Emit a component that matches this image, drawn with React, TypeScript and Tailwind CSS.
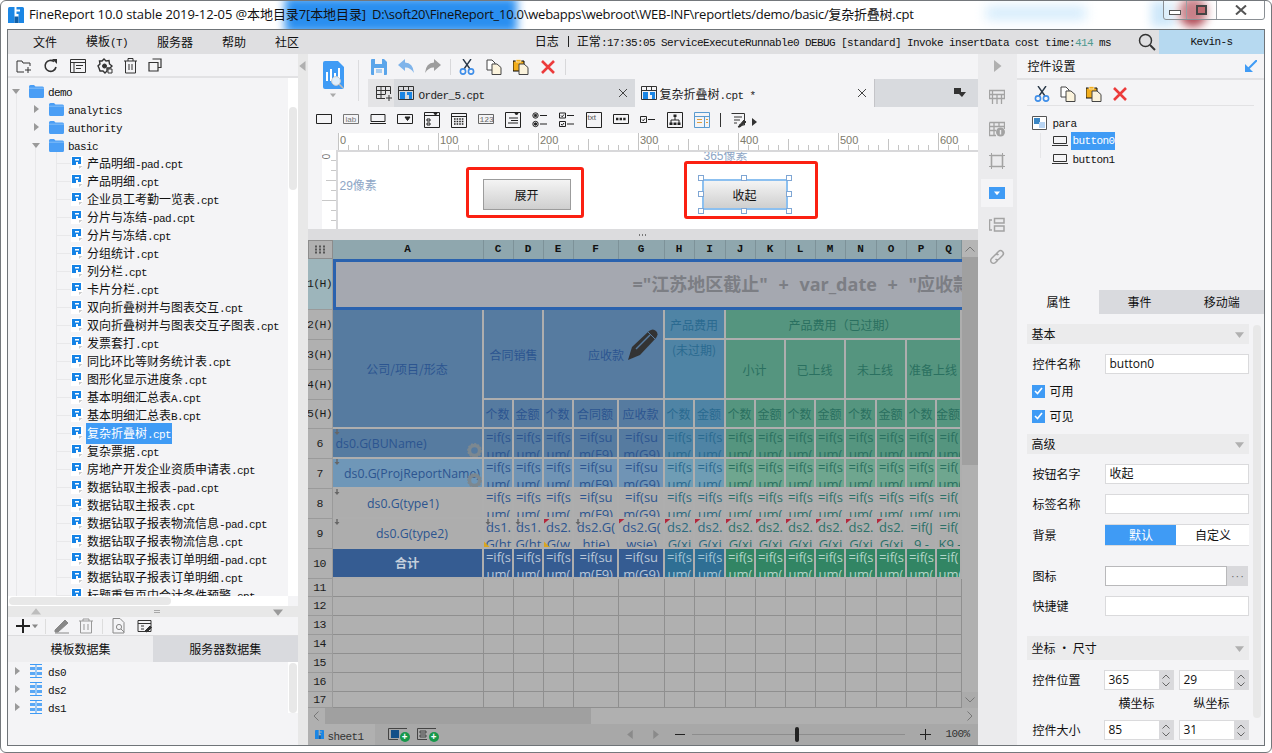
import type { ReactNode } from "react";

const SANS = "font-['Open_Sans','Noto_Sans_CJK_SC',sans-serif]";
const MONO = "font-['Liberation_Mono','Noto_Sans_CJK_SC',monospace]";

// ascii in the slab mono, cjk at 12px: same mix the app's bitmap font gives
function Mixed({ text }: { text: string }) {
  return (
    <>
      {text.split(/([\x00-\x7f]+)/).map((part, i) =>
        /^[\x00-\x7f]+$/.test(part) ? (
          <span key={i} className="font-['Liberation_Mono',monospace] text-[11px] tracking-[-0.6px]">{part}</span>
        ) : (
          <span key={i} className="font-['Noto_Sans_CJK_SC',sans-serif] text-[12px]">{part}</span>
        )
      )}
    </>
  );
}

function Svg({ w = 16, h = 16, children, className }: { w?: number; h?: number; children: ReactNode; className?: string }) {
  return (
    <svg width={w} height={h} viewBox={`0 0 ${w} ${h}`} fill="none" stroke="currentColor" className={`shrink-0 ${className ?? ""}`}>
      {children}
    </svg>
  );
}

function Tri({ dir, size = 8, className }: { dir: "down" | "right" | "left" | "up"; size?: number; className?: string }) {
  const pts = { down: "0,2 8,2 4,7", right: "2,0 7,4 2,8", left: "6,0 1,4 6,8", up: "0,6 8,6 4,1" }[dir];
  return (
    <svg width={size} height={size} viewBox="0 0 8 8" className={`shrink-0 ${className ?? ""}`}>
      <polygon points={pts} fill="currentColor" />
    </svg>
  );
}

const Folder = () => (
  <svg width="15" height="13" viewBox="0 0 15 13" className="shrink-0">
    <path d="M0 1.5Q0 0 1.5 0H5L6.5 1.5H13.5Q15 1.5 15 3V11.5Q15 13 13.5 13H1.5Q0 13 0 11.5Z" fill="#4a9ef5" />
    <path d="M0 3.2H15" stroke="#9ccbfa" strokeWidth="0.7" />
  </svg>
);

const CptFile = () => (
  <svg width="12" height="14" viewBox="0 0 12 14" className="shrink-0">
    <path d="M0 0H12V10L9 14H0Z" fill="#fff" />
    <path d="M1 1H10V8H7V6H5V9H1Z" fill="#1583e6" />
    <path d="M4 3H8V4.5H4Z" fill="#fff" />
    <path d="M8 13L11.5 10H8Z" fill="#c8c8c8" />
  </svg>
);

const FrMark = ({ s = 16 }: { s?: number }) => (
  <svg width={s} height={s} viewBox="0 0 16 16" className="shrink-0">
    <path d="M0 1.5Q0 0 1.5 0H6.5V16H0Z" fill="#1b86e4" />
    <path d="M8.5 0H14.5Q16 0 16 1.5V16H10.5V7H8.5V4.5H12V2.5H8.5Z" fill="#1b86e4" />
    <path d="M6.5 9.5H10.5V16H6.5Z" fill="#0f5fa8" />
  </svg>
);

const Cut = () => (
  <Svg>
    <path d="M4 0L11 10M12 0L5 10" stroke="#2b3a4a" strokeWidth="1.4" />
    <circle cx="4" cy="12.5" r="2.6" stroke="#3f8ee8" strokeWidth="1.6" />
    <circle cx="12" cy="12.5" r="2.6" stroke="#3f8ee8" strokeWidth="1.6" />
  </Svg>
);

const CopyIcon = () => (
  <Svg>
    <path d="M1 1H6L9 4V11H1Z" fill="#fff" stroke="#444" />
    <path d="M6 5H11L15 8.5V15.5H6Z" fill="#fbf3dc" stroke="#444" />
  </Svg>
);

const Paste = () => (
  <Svg>
    <path d="M0 2H11V12H0Z" fill="#f2ae1c" />
    <path d="M3 0.5H8V3H3Z" fill="#f2ae1c" stroke="#fff" strokeWidth="0.6" />
    <path d="M6 5H11L15 8.5V15.5H6Z" fill="#fbf3dc" stroke="#444" />
  </Svg>
);

const Del = () => (
  <Svg>
    <path d="M2 2L14 14M14 2L2 14" stroke="#ec3b3b" strokeWidth="2.6" />
  </Svg>
);

const BtnIcon = () => (
  <Svg h={10} className="text-[#333]">
    <path d="M1.5 0.5H14.5V7.5H1.5Z" />
    <path d="M0 9.5H16" />
  </Svg>
);

const leftTools = [
  <Svg key="a" className="text-[#333]"><path d="M1 3H6L7 5H14V8M1 3V14H8M12 9V15M9 12H15" /></Svg>,
  <Svg key="b" className="text-[#333]"><path d="M13 9A5.5 5.5 0 1 1 11 3.5" strokeWidth="1.6" /><path d="M9 1H14V6Z" fill="currentColor" stroke="none" /></Svg>,
  <Svg key="c" className="text-[#333]"><path d="M0.5 1.5H15.5V14.5H0.5ZM0.5 4.5H15.5M4 4.5V14.5M6 7.5H13M6 10.5H11" /></Svg>,
  <Svg key="d" className="text-[#333]"><path d="M7 1L9 3L12 2.5L12.5 6L15 8L13 10H10V13L8 15L6 13H3L2 10L1 8L3 6L2.5 3L5 3Z" strokeWidth="1.4" /><circle cx="7.5" cy="8" r="2" fill="currentColor" /><path d="M11 11H15V15H11Z" fill="#f4f4f6" /></Svg>,
  <Svg key="e" w={13} className="text-[#333]"><path d="M0 3H13M4 3V0.5H9V3M1.5 3V15H11.5V3M5 6V12M8 6V12" /></Svg>,
  <Svg key="f" w={14} className="text-[#333]"><path d="M4.5 1H13V9.5H10M1 4.5H10V13H1Z" strokeWidth="1.2" /></Svg>,
];

const widgetIcons = [
  <path key="0" d="M0.5 2.5H15.5V11.5H0.5Z" />,
  <g key="1"><path d="M0.5 2.5H15.5V11.5H0.5Z" stroke="#777" /><text x="2.5" y="10" fontSize="8" fill="#777" stroke="none" fontFamily="Liberation Sans">lab</text></g>,
  <path key="2" d="M1 2.5H15V9.5H1ZM0 11.5H16" />,
  <g key="3"><path d="M0.5 2.5H15.5V11.5H0.5Z" /><path d="M8 5H13L10.5 8.5Z" fill="#222" /></g>,
  <g key="4"><path d="M0.5 0.5H15.5V15.5H0.5ZM0.5 3.5H15.5M3 7H6V9H3ZM3 11H6V13H3Z" /><path d="M10 1.5H13L11.5 3Z" fill="#222" /></g>,
  <g key="5"><path d="M0.5 1.5H15.5V15.5H0.5ZM0.5 4.5H15.5" /><path d="M3 7H13M3 9.5H13M3 12H13" strokeWidth="1.4" strokeDasharray="1.6 1" /></g>,
  <g key="6"><path d="M0.5 2.5H15.5V11.5H0.5Z" stroke="#666" /><text x="1.5" y="10" fontSize="8" fill="#666" stroke="none" fontFamily="Liberation Mono">123</text></g>,
  <g key="7"><path d="M0.5 0.5H15.5V15.5H0.5ZM4 6H13M6 8.5H13M3 11H13" /><path d="M10 1.5H13L11.5 3Z" fill="#222" /></g>,
  <g key="8"><circle cx="3.5" cy="3.5" r="2.7" /><circle cx="3.5" cy="3.5" r="1.2" fill="#222" /><circle cx="3.5" cy="12" r="2.7" /><circle cx="3.5" cy="12" r="1.2" fill="#222" /><path d="M8 3.5H15M8 12H15" /></g>,
  <g key="9"><path d="M0.5 1H6.5V6H0.5ZM0.5 9.5H6.5V14.5H0.5ZM2 3.5L3.2 4.8L5 2.5M2 12L3.2 13.3L5 11M8 3.5H15M8 12H15" /></g>,
  <g key="10"><path d="M0.5 0.5H15.5V15.5H0.5Z" /><text x="1.5" y="8" fontSize="8" fill="#555" stroke="none" fontFamily="Liberation Sans">txt</text></g>,
  <g key="11"><path d="M0.5 2.5H15.5V11.5H0.5Z" /><path d="M3 7H13" strokeWidth="2.4" strokeDasharray="2.4 1.2" /></g>,
  <path key="12" d="M0.5 4.5H6.5V10.5H0.5ZM2 7.5L3.2 8.8L5 6.5M8 7.5H15" />,
  <g key="13"><path d="M0.5 0.5H15.5V15.5H0.5ZM8 5V8M4 11V8H12V11" /><path d="M6.5 2.5H9.5V5H6.5ZM2.5 10.5H5.5V13H2.5ZM6.5 10.5H9.5V13H6.5ZM10.5 10.5H13.5V13H10.5Z" fill="#222" stroke="none" /></g>,
  <g key="14"><path d="M0.5 0.5H15.5V15.5H0.5ZM0.5 4.5H15.5M10.5 4.5V15.5" stroke="#5a9bd0" /><path d="M3 7.5H8M3 10.5H8M12 7.5H14M12 10.5H14" stroke="#e0a040" /></g>,
];

const treeFiles = [
  "产品明细-pad.cpt", "产品明细.cpt", "企业员工考勤一览表.cpt", "分片与冻结-pad.cpt", "分片与冻结.cpt",
  "分组统计.cpt", "列分栏.cpt", "卡片分栏.cpt", "双向折叠树并与图表交互.cpt", "双向折叠树并与图表交互子图表.cpt",
  "发票套打.cpt", "同比环比等财务统计表.cpt", "图形化显示进度条.cpt", "基本明细汇总表A.cpt", "基本明细汇总表B.cpt",
  "复杂折叠树.cpt", "复杂票据.cpt", "房地产开发企业资质申请表.cpt", "数据钻取主报表-pad.cpt", "数据钻取主报表.cpt",
  "数据钻取子报表物流信息-pad.cpt", "数据钻取子报表物流信息.cpt", "数据钻取子报表订单明细-pad.cpt", "数据钻取子报表订单明细.cpt",
  "标题重复页中合计条件预警.cpt",
];

function TitleBar() {
  return (
    <div className="relative h-[28px] overflow-hidden">
      <div className="absolute left-[284px] top-[-4px] w-[232px] h-[36px] bg-[#2a8ff0] blur-[5px]" />
      <div className="absolute left-[985px] top-[5px] w-[100px] h-[14px] bg-[#d5ecfc] blur-[6px]" />
      <div className="absolute left-[1150px] top-[0px] w-[24px] h-[26px] bg-[#cfe8fa] blur-[5px]" />
      <div className="absolute left-[1178px] top-[-4px] w-[28px] h-[30px] rounded-full bg-[#b04a55] blur-[5px]" />
      <div className="relative flex items-center h-full pl-[7px] text-[13px] text-[#111] whitespace-nowrap font-['Open_Sans','Noto_Sans_CJK_SC',sans-serif]">
        <FrMark />
        <span className="ml-[5px] w-[343px] tracking-[-0.1px]">FineReport 10.0 stable 2019-12-05 @本地目录7[本地目录]</span>
        <span className="tracking-[-0.25px]">D:\soft20\FineReport_10.0\webapps\webroot\WEB-INF\reportlets/demo/basic/复杂折叠树.cpt</span>
      </div>
      <div className="absolute right-[6px] top-[-1px] w-[102px] h-[20px] flex border border-[#8a8f94] rounded-b-[3px] bg-white/30">
        <div className="w-[23px] flex items-center justify-center border-r border-[#9aa0a5] pt-[5px]">
          <div className="w-[12px] h-[5px] border border-[#555] bg-white" />
        </div>
        <div className="w-[30px] flex items-center justify-center border-r border-[#9aa0a5]">
          <div className="w-[11px] h-[10px] border-2 border-[#444] bg-[#c06a70]" />
        </div>
        <div className="flex-1 flex items-center justify-center">
          <svg width="12" height="10" viewBox="0 0 12 10"><path d="M1 0.5L11 9.5M11 0.5L1 9.5" stroke="#555" strokeWidth="2" /></svg>
        </div>
      </div>
    </div>
  );
}

function MenuBar() {
  return (
    <div className="h-[24px] shrink-0 bg-[#dfdfe1] flex items-center justify-between text-[12px] text-[#111] font-['Noto_Sans_CJK_SC',sans-serif]">
      <div className="flex items-center gap-[29px] pl-[25px]">
        <span>文件</span>
        <span>模板<span className={`${MONO} text-[11px] tracking-[-0.6px]`}>(T)</span></span>
        <span>服务器</span>
        <span>帮助</span>
        <span>社区</span>
      </div>
      <div className="flex items-center h-full">
        <span className="whitespace-nowrap">日志<span className="inline-block w-[1px] h-[11px] bg-[#222] ml-[9px] mr-[8px] align-[-1px]" />正常<span className="font-['Liberation_Mono',monospace] text-[11px] tracking-[-0.6px]">:17:35:05 ServiceExecuteRunnable0 DEBUG [standard] Invoke insertData cost time:<span className="text-[#4f9a90]">414</span> ms</span></span>
        <Svg w={18} h={18} className="ml-[27px] text-[#333]"><circle cx="7.5" cy="7.5" r="6" strokeWidth="1.5" /><path d="M12 12L17 17" strokeWidth="2" /></Svg>
        <div className={`ml-[3px] w-[105px] h-full bg-[#b6d9f0] flex items-center justify-center ${MONO} text-[11px] tracking-[-0.6px]`}>Kevin-s</div>
      </div>
    </div>
  );
}

function TreeFolder({ name, indent, open }: { name: string; indent: string; open: boolean }) {
  return (
    <div className={`h-[18px] flex items-center ${indent}`}>
      <Tri dir={open ? "down" : "right"} size={8} className="text-[#9a9a9a]" />
      <span className="w-[9px]" />
      <Folder />
      <span className="ml-[4px]"><Mixed text={name} /></span>
    </div>
  );
}

function LeftPanel() {
  return (
    <div className="w-[290px] flex flex-col bg-[#f4f4f6] text-[#111] [&>*]:shrink-0">
      <div className="h-[24px] flex items-center pl-[8px] pt-[1px] gap-[11px] border-b-2 border-[#e2e2e4]">
        {leftTools}
      </div>
      <div className="h-[518px] flex overflow-hidden">
        <div className="relative flex-1 pt-[4px] whitespace-nowrap leading-[18px]">
          <div className="absolute left-[8px] top-[14px] bottom-0 w-px bg-[#e8e8ea]" />
          <div className="absolute left-[27px] top-[68px] bottom-0 w-px bg-[#e8e8ea]" />
          <div className="absolute left-[48px] top-[74px] bottom-0 w-px bg-[#e8e8ea]" />
          <div className="relative">
            <TreeFolder name="demo" indent="pl-[4px]" open />
            <TreeFolder name="analytics" indent="pl-[24px]" open={false} />
            <TreeFolder name="authority" indent="pl-[24px]" open={false} />
            <TreeFolder name="basic" indent="pl-[24px]" open />
            {treeFiles.map((f) => (
              <div key={f} className="h-[18px] flex items-center pl-[49px]">
                <span className="w-[14px] h-px bg-[#e8e8ea]" />
                <CptFile />
                <span className={f === "复杂折叠树.cpt" ? "ml-[3px] bg-[#3f9bf5] text-white px-[1px]" : "ml-[4px]"}>
                  <Mixed text={f} />
                </span>
              </div>
            ))}
          </div>
        </div>
        <div className="w-[10px] bg-white pt-[29px] px-[1px]">
          <div className="h-[83px] rounded-[4px] bg-[#e8e8e8]" />
        </div>
      </div>
      <div className="h-[10px] bg-white py-[1px] pl-[1px] flex">
        <div className="w-[162px] rounded-[4px] bg-[#e8e8e8]" />
        <div className="ml-auto w-[10px] -my-[1px] bg-[#f4f4f6]" />
      </div>
      <div className="h-[11px] bg-[#e8e8e8] flex items-center justify-between pl-[23px] pr-[15px] text-[#bdbdbd]">
        <Tri dir="up" size={10} />
        <div className="w-[6px] h-[3px] border-y border-[#a8a8a8]" />
        <Tri dir="down" size={10} className="text-[#9a9a9a]" />
      </div>
      <div className="h-[19px] flex items-center pl-[8px] border-b border-[#dcdcde]">
        <Svg w={14} h={14} className="text-[#222]"><path d="M7 0V14M0 7H14" strokeWidth="2" /></Svg>
        <Tri dir="down" size={6} className="ml-[2px] text-[#888]" />
        <span className="w-px h-[15px] bg-[#ddd] ml-[7px]" />
        <Svg className="ml-[8px] text-[#888]"><path d="M1 15H15" /><path d="M1 12L11 2L14 5L4 14H1Z" fill="#888" /></Svg>
        <Svg w={14} className="ml-[9px] text-[#999]"><path d="M0 3H14M4 3V1H10V3M1.5 3V15H12.5V3M5 6V12M9 6V12" /></Svg>
        <span className="w-px h-[15px] bg-[#ddd] ml-[9px]" />
        <Svg w={14} className="ml-[9px] text-[#888]"><path d="M1 0.5H8L12 4.5V15H1Z" /><circle cx="7" cy="9" r="2.6" /><path d="M9 11L12 14" /></Svg>
        <Svg className="ml-[11px] text-[#333]"><path d="M1 2.5H14V13.5H1ZM1 5.5H14M4 8H7M4 11H7" /><path d="M8 13L13 8L14.5 9.5L10 14Z" fill="#333" /></Svg>
      </div>
      <div className="h-[26px] flex text-[12px] font-['Noto_Sans_CJK_SC',sans-serif]">
        <div className="w-[145px] flex items-center justify-center bg-[#eeeef0]">模板数据集</div>
        <div className="flex-1 flex items-center justify-center bg-[#d9dade]">服务器数据集</div>
      </div>
      <div className="h-[83px] flex">
        <div className="flex-1 pl-[5px] leading-[18px]">
          {["ds0", "ds2", "ds1"].map((d) => (
            <div key={d} className="h-[18px] flex items-center">
              <Tri dir="right" size={8} className="text-[#9a9a9a]" />
              <svg width="14" height="14" viewBox="0 0 14 14" className="ml-[8px] shrink-0">
                <path d="M7 0V14M1 0.5H13M1 13.5H13" stroke="#3f9bf5" />
                <path d="M1 3H6V6H1ZM8 3H13V6H8ZM1 8H6V11H1ZM8 8H13V11H8Z" fill="#5aa8f5" />
              </svg>
              <span className="ml-[5px]"><Mixed text={d} /></span>
            </div>
          ))}
        </div>
        <div className="w-[10px] bg-white px-[1px] pt-[1px] h-[51px]">
          <div className="h-[50px] rounded-[4px] bg-[#e8e8e8]" />
        </div>
      </div>
    </div>
  );
}

function Ruler() {
  const ticks = Array.from({ length: 64 }, (_, i) => i * 10);
  return (
    <svg width="640" height="17" viewBox="0 0 640 17" className="block">
      {ticks.map((x) => (
        <path key={x} d={`M${x + 0.5} ${x % 100 === 0 ? 0 : x % 50 === 0 ? 6 : 12}V17`} stroke="#c4c4c4" />
      ))}
      {[0, 100, 200, 300, 400, 500, 600].map((n) => (
        <text key={n} x={n + 2} y={11} fontSize="11" fill="#7d7a6c" fontFamily="Liberation Sans">{n}</text>
      ))}
    </svg>
  );
}

function Handles() {
  const spots = [
    "left-[-6px] top-[-6px]", "left-[37px] top-[-6px]", "right-[-6px] top-[-6px]",
    "left-[-6px] top-[10px]", "right-[-6px] top-[10px]",
    "left-[-6px] bottom-[-6px]", "left-[37px] bottom-[-6px]", "right-[-6px] bottom-[-6px]",
  ];
  return (
    <>
      {spots.map((s) => (
        <div key={s} className={`absolute w-[6px] h-[6px] border border-[#7fa6d4] bg-white ${s}`} />
      ))}
    </>
  );
}

const colLetters = ["A", "C", "D", "E", "F", "G", "H", "I", "J", "K", "L", "M", "N", "O", "P", "Q"];
const formulaCols = colLetters.slice(1);

const tone: Record<"blue" | "teal" | "green", Record<number, string>> = {
  blue: {
    6: "bg-[#567ba0] text-[#2c5590]", 7: "bg-[#7094b5] text-[#2c5590]", 8: "bg-[#adadad] text-[#2c5590]",
    9: "bg-[#adadad] text-[#2c5590]", 10: "bg-[#355c92] text-[#bcc8d8]",
  },
  teal: {
    6: "bg-[#4f84a5] text-[#2a6a90]", 7: "bg-[#6f9db5] text-[#2a6a90]", 8: "bg-[#adadad] text-[#2a6a80]",
    9: "bg-[#adadad] text-[#2a6a80]", 10: "bg-[#2f6f94] text-[#a5c5d5]",
  },
  green: {
    6: "bg-[#55957f] text-[#2a7060]", 7: "bg-[#6fa68f] text-[#2a7060]", 8: "bg-[#adadad] text-[#2a7068]",
    9: "bg-[#adadad] text-[#2a7068]", 10: "bg-[#328564] text-[#b5d5c8]",
  },
};

const row9 = ["ds1.\nG(ht", "ds1.\nG(ht", "ds2.\nG(w", "ds2.G(\nhtie)", "ds2.G(\nwsie)", "ds2.\nG(xi", "ds2.\nG(xi", "ds2.\nG(xi", "ds2.\nG(xi", "ds2.\nG(xi", "ds2.\nG(xi", "ds2.\nG(xi", "ds2.\nG(xi", "=if(J\n9 -", "=if(\nK9 -"];
const arrowIn = ["C", "D", "F"];
const redIn = ["E", "G", "H", "I", "J", "K", "L", "M", "N", "O"];

function sectionOf(col: string): "blue" | "teal" | "green" {
  if (["C", "D", "E", "F", "G"].includes(col)) return "blue";
  if (col === "H" || col === "I") return "teal";
  return "green";
}

function formula(col: string) {
  if (col === "F") return "=if(su\nm(F9)";
  if (col === "G") return "=if(su\nm(G9)";
  if (col === "Q") return "=if(\num(";
  return "=if(s\num(";
}

const DownMark = () => <span className="absolute left-[1px] top-0 text-[#666]"><Svg w={6} h={6}><path d="M3 0V3" strokeWidth="1.4" /><path d="M0.5 3H5.5L3 6Z" fill="currentColor" stroke="none" /></Svg></span>;

const Gear = () => (
  <svg width="15" height="15" viewBox="0 0 15 15" className="absolute right-0 bottom-[-1px]">
    <circle cx="7.5" cy="7.5" r="5" fill="none" stroke="#7c8890" strokeWidth="3.4" />
    <circle cx="7.5" cy="7.5" r="6.6" fill="none" stroke="#7c8890" strokeWidth="1.6" strokeDasharray="2 1.4" />
  </svg>
);

function HdCell({ className, children }: { className: string; children?: ReactNode }) {
  return (
    <div className={`relative flex items-center justify-center overflow-hidden whitespace-nowrap pt-[1px] text-[12px] font-['Noto_Sans_CJK_SC',sans-serif] border-r-2 border-b-2 border-[#aeaeae] ${className}`}>
      {children}
    </div>
  );
}

function RowHead({ n, h, active }: { n: number; h?: boolean; active?: boolean }) {
  return (
    <div className={`flex items-center justify-center border-b border-r border-[#9a9a9a] font-['Liberation_Mono',monospace] text-[11.5px] tracking-[-0.7px] text-[#1c1c1c] ${active ? "bg-[#9db5bb]" : "bg-[#b0b0b0]"}`}>
      {n}{h ? "(H)" : ""}
    </div>
  );
}

function Sheet() {
  const headers5 = ["个数", "金额", "个数", "合同额", "应收款", "个数", "金额", "个数", "金额", "个数", "金额", "个数", "金额", "个数", "金额"];
  return (
    <div className="grid grid-cols-[25px_151px_30px_30px_30px_45px_46px_30px_31px_30px_30px_30px_30px_31px_30px_30px_25px] grid-rows-[19px_51px_30px_30px_30px_29px_30px_30px_30px_30px_30px_18px_19px_19px_19px_19px_19px_16px] w-[654px] h-[468px] overflow-hidden bg-[#b0b0b0]">
      {/* corner and letters */}
      <div className="bg-[#b0b0b0] border border-[#8c8c8c] flex items-center justify-center">
        <Svg w={11} h={9} className="text-[#555]"><path d="M0 1.5H11M0 4.5H11M0 7.5H11" strokeWidth="2" strokeDasharray="2 2" /></Svg>
      </div>
      {colLetters.map((c) => (
        <div key={c} className="bg-[#8fa7ae] border-r border-[#7d9299] flex items-center justify-center font-['Liberation_Mono',monospace] text-[11px] font-bold text-[#111]">{c}</div>
      ))}

      {/* merged head, placed by grid line */}
      <div className="col-[2/18] row-[2/3] border-y-[3px] border-l-[3px] border-[#2a62ae] bg-[#a5a8b0] flex items-center pl-[297px] overflow-hidden whitespace-nowrap text-[18px] font-bold text-[#7c7e84] [word-spacing:6px] font-['Open_Sans','Noto_Sans_CJK_SC',sans-serif]">
        ="江苏地区截止" + var_date + "应收款项汇总表"
      </div>
      <HdCell className="col-[2/3] row-[3/7] bg-[#567ba0] text-[#2c5590]">公司/项目/形态</HdCell>
      <HdCell className="col-[3/5] row-[3/6] bg-[#567ba0] text-[#2c5590] pl-[2px]">合同销售</HdCell>
      <HdCell className="col-[5/8] row-[3/6] bg-[#567ba0] text-[#2c5590]">
        <span className="ml-[6px]">应收款</span>
        <svg width="31" height="32" viewBox="0 0 31 32" className="absolute left-[84px] top-[19px]">
          <path d="M0 31L4 18L21 2Q25 -1 28 2Q31 5 28 9L12 26Z" fill="#333" />
          <path d="M8 20L22 6" stroke="#567ba0" strokeWidth="1.5" />
          <path d="M20 3L27 10" stroke="#567ba0" strokeWidth="1" />
        </svg>
      </HdCell>
      <HdCell className="col-[8/10] row-[3/4] bg-[#4f84a5] text-[#2a6a90]">产品费用</HdCell>
      <HdCell className="col-[8/10] row-[4/6] bg-[#4f84a5] text-[#2a6a90] !items-start">(未过期)</HdCell>
      <HdCell className="col-[10/18] row-[3/4] bg-[#55957f] text-[#2a7060]">产品费用（已过期）</HdCell>
      <HdCell className="col-[10/12] row-[4/6] bg-[#55957f] text-[#2a7060]">小计</HdCell>
      <HdCell className="col-[12/14] row-[4/6] bg-[#55957f] text-[#2a7060]">已上线</HdCell>
      <HdCell className="col-[14/16] row-[4/6] bg-[#55957f] text-[#2a7060]">未上线</HdCell>
      <HdCell className="col-[16/18] row-[4/6] bg-[#55957f] text-[#2a7060]">准备上线</HdCell>

      <RowHead n={1} h active />
      <RowHead n={2} h />
      <RowHead n={3} h />
      <RowHead n={4} h />
      <RowHead n={5} h />
      {headers5.map((t, i) => (
        <HdCell key={i} className={tone[sectionOf(formulaCols[i])][6]}>{t}</HdCell>
      ))}

      {[6, 7, 8, 9, 10].map((r) => (
        <FragmentRow key={r} r={r} />
      ))}

      {[11, 12, 13, 14, 15, 16, 17].map((r) => (
        <EmptyRow key={r} r={r} />
      ))}
    </div>
  );
}

function FragmentRow({ r }: { r: number }) {
  const aCell: Record<number, string> = {
    6: "bg-[#567ba0] text-[#2c5590] justify-start pl-[3px]",
    7: "bg-[#6f97b8] text-[#2c5590] justify-center pl-[10px]",
    8: "bg-[#adadad] text-[#2c5590] justify-center pr-[8px]",
    9: "bg-[#adadad] text-[#2c5590] justify-center pl-[10px]",
    10: "bg-[#355c92] text-[#c5cfdc] justify-center font-bold",
  };
  const aText: Record<number, string> = { 6: "ds0.G(BUName)", 7: "ds0.G(ProjReportName)", 8: "ds0.G(type1)", 9: "ds0.G(type2)", 10: "合计" };
  return (
    <>
      <RowHead n={r} />
      <div className={`relative flex items-center overflow-hidden whitespace-nowrap pt-[2px] text-[12.3px] border-r-2 border-b-2 border-[#aeaeae] ${SANS} ${aCell[r]}`}>
        {r < 10 && <DownMark />}
        {aText[r]}
        {r < 8 && <Gear />}
      </div>
      {formulaCols.map((c, i) => (
        <div key={c} className={`relative overflow-hidden whitespace-pre text-center leading-[17px] pl-[2px] text-[13px] border-r-2 border-b-2 border-[#aeaeae] ${SANS} ${tone[sectionOf(c)][r]}`}>
          {r === 9 ? row9[i] : formula(c)}
          {r === 9 && arrowIn.includes(c) && <DownMark />}
          {r === 9 && redIn.includes(c) && <span className="absolute left-0 top-0 w-[6px] h-[5px] bg-[#b4283c] [clip-path:polygon(0_0,100%_0,0_100%)]" />}
          {r === 9 && (c === "C" || c === "E") && <span className="absolute left-0 bottom-0 w-[6px] h-[6px] bg-[#d9a520] [clip-path:polygon(0_100%,100%_100%,0_0)]" />}
        </div>
      ))}
    </>
  );
}

function EmptyRow({ r }: { r: number }) {
  return (
    <>
      <RowHead n={r} />
      {colLetters.map((c) => (
        <div key={c} className="bg-[#b0b0b0] border-r border-b border-[#8f8f8f]" />
      ))}
    </>
  );
}

function Center() {
  return (
    <div className="w-[670px] flex flex-col bg-[#f4f4f6] [&>*]:shrink-0">
      <div className="h-[53px] flex">
        <div className="w-[60px] relative flex">
          <div className="ml-[15px] mt-[7px] flex flex-col items-center w-[21px]">
            <svg width="21" height="28" viewBox="0 0 21 28">
              <path d="M2 0H15L21 6V26Q21 28 19 28H2Q0 28 0 26V2Q0 0 2 0Z" fill="#3f9bf5" />
              <path d="M3 11H5V20H3ZM7 8H9V20H7ZM11 12H13V18H11ZM15 7H17V18H15Z" fill="#fff" />
              <circle cx="13" cy="20" r="4.4" fill="#dfeefb" stroke="#ccc" />
              <path d="M16 23L20 27" stroke="#bbb" strokeWidth="1.6" />
            </svg>
            <Tri dir="down" size={6} className="mt-[3px] text-[#aaa]" />
          </div>
          <div className="absolute right-[9px] top-[6px] h-[41px] w-px bg-[#dcdcde]" />
        </div>
        <div className="flex-1 flex flex-col">
          <div className="h-[25px] flex items-center pl-[3px]">
            <Svg className="text-[#4a9ef5]"><path d="M0 1Q0 0 1 0H13L16 3V15Q16 16 15 16H1Q0 16 0 15Z" fill="#5aa5ea" stroke="none" /><path d="M4 0H11V5H4ZM3 9H13V16H3Z" fill="#f4f4f6" stroke="none" /><path d="M5 11H11M5 13H11" stroke="#5aa5ea" /></Svg>
            <Svg className="ml-[11px]"><path d="M0 6L7 0V3.5Q15 3.5 16 14Q12 8 7 8.5V12Z" fill="#7fb4ea" stroke="none" /></Svg>
            <Svg className="ml-[11px]"><path d="M16 6L9 0V3.5Q1 3.5 0 14Q4 8 9 8.5V12Z" fill="#9d9d9d" stroke="none" /></Svg>
            <span className="ml-[9px] mr-[8px] w-px h-[16px] bg-[#d8d8da]" />
            <Cut />
            <span className="ml-[11px]"><CopyIcon /></span>
            <span className="ml-[11px]"><Paste /></span>
            <span className="ml-[11px]"><Del /></span>
            <span className="ml-[9px] w-px h-[16px] bg-[#d8d8da]" />
          </div>
          <div className="h-[28px] flex bg-[#d8dade] text-[#222]">
            <div className="w-[26px] flex items-center justify-center pl-[6px] bg-[#e4e4e6]">
              <Svg className="text-[#333]"><path d="M0.5 1.5H14.5V9M0.5 1.5V13.5H9M0.5 5.5H14.5M0.5 9.5H9M5 1.5V13.5M9.5 1.5V9.5M13 10V16M10 13H16" /></Svg>
            </div>
            <div className="w-[241px] flex items-center">
              <span className="w-[25px] flex items-center justify-center">
                <Svg className="text-[#333]"><path d="M0.5 1.5H15.5V14.5H0.5ZM0.5 5.5H15.5M5.5 1.5V5.5M10.5 1.5V5.5" /><path d="M2 7H7V14H2Z" fill="#1b86e4" stroke="none" /><path d="M9 7H14V14H11V10H9Z" fill="#1b86e4" stroke="none" /></Svg>
              </span>
              <span><Mixed text="Order_5.cpt" /></span>
              <span className="ml-auto mr-[7px] text-[#444]"><Svg w={10} h={10}><path d="M1 1L9 9M9 1L1 9" /></Svg></span>
            </div>
            <div className="w-[239px] bg-[#f4f4f6] flex items-center pl-[6px]">
              <Svg><path d="M0.5 1.5H15.5V14.5H0.5ZM0.5 5.5H15.5M5.5 1.5V5.5M10.5 1.5V5.5" stroke="#333" /><path d="M2 7H7V14H2Z" fill="#1b86e4" stroke="none" /><path d="M9 7H14V14H11V10H9Z" fill="#1b86e4" stroke="none" /></Svg>
              <span className="ml-[3px]"><Mixed text="复杂折叠树.cpt *" /></span>
              <span className="ml-auto mr-[7px] text-[#444]"><Svg w={10} h={10}><path d="M1 1L9 9M9 1L1 9" /></Svg></span>
            </div>
            <div className="flex-1 flex items-center justify-end pr-[12px] border-l border-[#c4c4c8]">
              <svg width="12" height="11" viewBox="0 0 12 11"><path d="M0 0H7V4H12L8 9L5 6H0Z" fill="#333" /></svg>
            </div>
          </div>
        </div>
      </div>

      <div className="h-[26px] flex items-center pl-[8px] gap-[11px] text-[#222]">
        {widgetIcons.map((g, i) => (
          <Svg key={i}>{g}</Svg>
        ))}
        <span className="w-px h-[14px] bg-[#333] -mx-px" />
        <Svg className="text-[#333]"><path d="M0.5 1.5H13.5V13H8M3 5H11M3 8H9M3 11H6" /><path d="M7 15L13 8L15 10L9 15Z" fill="#333" /></Svg>
        <Tri dir="right" size={8} className="-ml-[8px] mt-[4px] text-[#333]" />
      </div>

      <div className="h-[17px] pl-[30px] overflow-hidden">
        <div className="h-full bg-white"><Ruler /></div>
      </div>

      <div className="h-[79px] flex">
        <div className="ml-[14px] w-[16px] bg-white border-r-2 border-[#d8d8da] relative overflow-hidden">
          <span className="absolute left-[1px] top-[-1px] rotate-90 origin-center text-[10px] text-[#777] font-['Liberation_Sans',sans-serif]">0</span>
          <svg width="14" height="79" viewBox="0 0 14 79" className="block">
            {[10, 20, 30, 40, 50, 60, 70].map((y) => (
              <path key={y} d={`M${y % 50 === 0 ? 0 : y === 30 ? 4 : 9} ${y + 0.5}H14`} stroke="#c8c8c8" />
            ))}
          </svg>
        </div>
        {/* free canvas: the widgets sit at their form coordinates */}
        <div className="relative flex-1 bg-white border-t-2 border-[#d8d8da] overflow-hidden font-['Noto_Sans_CJK_SC',sans-serif]">
          <span className="absolute left-[2px] top-[25px] text-[12px] text-[#8ea6c6] font-['Liberation_Sans','Noto_Sans_CJK_SC',sans-serif]">29像素</span>
          <span className="absolute left-[366px] top-[-5px] text-[12px] text-[#8ea6c6] font-['Liberation_Sans','Noto_Sans_CJK_SC',sans-serif]">365像素</span>
          <div className="absolute left-[128px] top-[15px] w-[118px] h-[51px] border-[3px] border-[#fb2012] rounded-[3px]" />
          <div className="absolute left-[346px] top-[9px] w-[134px] h-[58px] border-[3px] border-[#fb2012] rounded-[3px]" />
          <div className="absolute left-[145px] top-[27px] w-[88px] h-[31px] border border-[#9c9c9c] bg-gradient-to-b from-[#f4f4f4] to-[#cfcfcf] flex items-center justify-center text-[12px] text-[#111]">展开</div>
          <div className="absolute left-[364px] top-[27px] w-[86px] h-[31px] border-2 border-[#8cc0f0] bg-gradient-to-b from-[#f4f4f4] to-[#cfcfcf] flex items-center justify-center text-[12px] text-[#111]">
            收起
            <Handles />
          </div>
        </div>
      </div>

      <div className="h-[11px] bg-[#dcdcde] flex items-center justify-center text-[#777]">
        <div className="w-[9px] h-[2px] [background-image:radial-gradient(circle,#777_1px,transparent_1px)] [background-size:3px_2px]" />
      </div>

      <div className="flex h-[468px]">
        <Sheet />
        <div className="w-[16px] bg-[#b0b0b0] flex flex-col">
          <div className="h-[17px] bg-[#b5b5b5] flex items-center justify-center text-[#777]">
            <Svg w={10} h={6}><path d="M0.5 5.5L5 1L9.5 5.5" /></Svg>
          </div>
          <div className="h-[208px] bg-[#a0a0a0]" />
          <div className="flex-1" />
          <div className="h-[16px] bg-[#ababab] flex items-center justify-center text-[#777]">
            <Svg w={10} h={6}><path d="M0.5 0.5L5 5L9.5 0.5" /></Svg>
          </div>
        </div>
      </div>

      <div className="h-[16px] flex bg-[#b0b0b0] text-[#777]">
        <div className="w-[17px] flex items-center justify-center"><Svg w={6} h={10}><path d="M5.5 0.5L1 5L5.5 9.5" /></Svg></div>
        <div className="w-[266px] bg-[#a0a0a0]" />
        <div className="flex-1" />
        <div className="w-[16px] flex items-center justify-center"><Svg w={6} h={10}><path d="M0.5 0.5L5 5L0.5 9.5" /></Svg></div>
      </div>

      <div className="h-[21px] flex items-center bg-[#a8a8a8] text-[#333] leading-none">
        <div className="w-[67px] h-full bg-[#b0b0b0] flex items-center pl-[7px]">
          <FrMark s={9} />
          <span className="ml-[4px]"><Mixed text="sheet1" /></span>
        </div>
        <div className="ml-[13px] relative w-[22px] h-[14px]">
          <Svg w={20} h={12} className="text-[#444]"><path d="M0.5 0.5H19M0.5 0.5V11.5H10" /><path d="M3 2H11V10H3Z" fill="#144f88" stroke="none" /></Svg>
          <span className="absolute right-0 bottom-0 w-[10px] h-[10px] rounded-full bg-[#17974a] text-white text-[10px] leading-[9px] text-center font-bold">+</span>
        </div>
        <div className="ml-[7px] relative w-[22px] h-[14px]">
          <Svg w={20} h={12} className="text-[#444]"><path d="M0.5 0.5H19M0.5 0.5V11.5H10M3 3H9V5H3ZM3 7H9V9H3Z" /></Svg>
          <span className="absolute right-0 bottom-0 w-[10px] h-[10px] rounded-full bg-[#17974a] text-white text-[10px] leading-[9px] text-center font-bold">+</span>
        </div>
        <Tri dir="left" size={9} className="ml-[187px] text-[#8a8a8a]" />
        <Tri dir="right" size={9} className="ml-[16px] text-[#8a8a8a]" />
        <span className="ml-[15px] w-[10px] h-[1px] bg-[#222]" />
        <div className="ml-[7px] w-[213px] h-px bg-[#8d8d8d] relative">
          <span className="absolute left-[103px] top-[-7px] w-[4px] h-[15px] rounded-[2px] bg-[#222]" />
        </div>
        <Svg w={11} h={11} className="ml-[15px] text-[#222]"><path d="M5.5 0V11M0 5.5H11" /></Svg>
        <span className="ml-[15px] font-['Liberation_Mono',monospace] text-[11px] tracking-[-0.6px]">100%</span>
      </div>
    </div>
  );
}

function Strip() {
  return (
    <div className="w-[40px] bg-[#ebebed] flex flex-col items-center text-[#a3a3a3]">
      <div className="h-[27px] flex items-center justify-center pb-[3px]"><Tri dir="right" size={12} className="text-[#b0b0b0]" /></div>
      <div className="h-[32px] flex items-center justify-center">
        <Svg><path d="M0.5 1.5H15.5V9.5H0.5ZM0.5 5.5H15.5M3.5 1.5V15M8 5.5V15M12.5 5.5V15" strokeWidth="1.3" /></Svg>
      </div>
      <div className="h-[32px] flex items-center justify-center">
        <Svg><path d="M0.5 1.5H15.5V8M0.5 1.5V14.5H7M0.5 5.5H15.5M0.5 9.5H7M5 1.5V14.5M10 1.5V5.5" strokeWidth="1.3" /><circle cx="11.5" cy="11" r="4.5" fill="#a3a3a3" stroke="none" /><path d="M11.5 9V13.5" stroke="#ebebed" strokeWidth="1.4" /></Svg>
      </div>
      <div className="h-[32px] flex items-center justify-center">
        <Svg><path d="M2.5 2.5H13.5V13.5H2.5Z" strokeWidth="1.6" /><path d="M0 2.5H2.5M13.5 2.5H16M0 13.5H2.5M13.5 13.5H16M2.5 0V2.5M13.5 0V2.5M2.5 13.5V16M13.5 13.5V16" /></Svg>
      </div>
      <div className="h-[28px] w-[32px] mt-[2px] mb-[2px] bg-[#f4f4f6] flex items-center justify-center">
        <div className="w-[16px] h-[12px] bg-[#3f9bf5] flex items-center justify-center text-white"><Tri dir="down" size={6} /></div>
      </div>
      <div className="h-[32px] flex items-center justify-center">
        <Svg><path d="M5.5 1.5H15V6H5.5ZM5.5 9H15V14H5.5ZM3 3H0.5V13H3" strokeWidth="1.5" /></Svg>
      </div>
      <div className="h-[32px] flex items-center justify-center">
        <Svg><path d="M7 5L9.5 2.5A2.5 2.5 0 0 1 13.5 6.5L10 10A2.5 2.5 0 0 1 6.5 10M9 11L6.5 13.5A2.5 2.5 0 0 1 2.5 9.5L6 6A2.5 2.5 0 0 1 9.5 6" strokeWidth="1.5" /></Svg>
      </div>
    </div>
  );
}

function Section({ title, h = "h-[20px]", mt }: { title: string; h?: string; mt: string }) {
  return (
    <div className={`${h} ${mt} w-[222px] bg-[#ebebec] flex items-center justify-between pl-[4px] pr-[5px]`}>
      <span>{title}</span>
      <Tri dir="down" size={9} className="text-[#b0b0b0]" />
    </div>
  );
}

function Field({ label, value, mt, border = "border-[#dadadc]" }: { label: string; value?: string; mt: string; border?: string }) {
  return (
    <div className={`${mt} w-[222px] h-[20px] flex items-center`}>
      <span className="w-[78px] pl-[5px]">{label}</span>
      <div className={`w-[144px] h-full bg-white border ${border} flex items-center px-[3px] ${SANS}`}>{value}</div>
    </div>
  );
}

function Check({ label, mt }: { label: string; mt: string }) {
  return (
    <div className={`${mt} h-[14px] flex items-center pl-[5px]`}>
      <span className="w-[13px] h-[13px] bg-[#3f9bf5] flex items-center justify-center">
        <svg width="9" height="8" viewBox="0 0 9 8"><path d="M1 4L3.5 6.5L8 1" stroke="#fff" strokeWidth="1.6" fill="none" /></svg>
      </span>
      <span className="ml-[4px]">{label}</span>
    </div>
  );
}

function Spin({ value }: { value: string }) {
  return (
    <div className="w-[70px] h-[20px] flex bg-white border border-[#dadadc]">
      <span className={`flex-1 flex items-center pl-[3px] ${SANS}`}>{value}</span>
      <span className="w-[14px] bg-[#d9d9dc] flex flex-col items-center justify-center gap-[3px] text-[#666]">
        <Svg w={8} h={5}><path d="M0.5 4.5L4 1L7.5 4.5" /></Svg>
        <Svg w={8} h={5}><path d="M0.5 0.5L4 4L7.5 0.5" /></Svg>
      </span>
    </div>
  );
}

function RightPanel() {
  return (
    <div className="w-[247px] flex flex-col bg-[#f4f4f6] text-[12px] text-[#111] font-['Noto_Sans_CJK_SC',sans-serif] [&>*]:shrink-0">
      <div className="h-[26px] flex items-center justify-between pl-[10px] pr-[7px] border-b-2 border-[#e2e2e4]">
        <span>控件设置</span>
        <svg width="12" height="12" viewBox="0 0 12 12"><path d="M12 0L3 9" stroke="#3f9bf5" strokeWidth="2" /><path d="M0 12V4L8 12Z" fill="#3f9bf5" /></svg>
      </div>
      <div className="h-[26px] mx-[10px] flex items-center pl-[7px] pt-[3px] gap-[10px] border-b border-[#e2e2e4]">
        <Cut />
        <CopyIcon />
        <Paste />
        <Del />
      </div>
      <div className="h-[184px] relative pt-[8px] pl-[15px] leading-[18px]">
        <div className="absolute left-[23px] top-[27px] h-[25px] w-px bg-[#e6e6e8]" />
        <div className="h-[18px] flex items-center">
          <svg width="15" height="14" viewBox="0 0 15 14">
            <path d="M0.5 0.5H14.5V13.5H0.5Z" fill="#fff" stroke="#555" />
            <path d="M2 2H8V8H2Z" fill="#3a86c4" />
            <path d="M7 6H13V12H7Z" fill="#b8d4f2" />
          </svg>
          <span className="ml-[5px]"><Mixed text="para" /></span>
        </div>
        <div className="h-[18px] flex items-center pl-[20px]">
          <BtnIcon />
          <span className="ml-[3px] h-[18px] bg-[#3f9bf5] text-white px-[1px] flex items-center"><Mixed text="button0" /></span>
        </div>
        <div className="h-[18px] flex items-center pl-[20px]">
          <BtnIcon />
          <span className="ml-[4px]"><Mixed text="button1" /></span>
        </div>
      </div>
      <div className="h-[24px] flex">
        <div className="w-[82px] flex items-center justify-center">属性</div>
        <div className="w-[80px] flex items-center justify-center bg-[#d9dade]">事件</div>
        <div className="flex-1 flex items-center justify-center bg-[#d9dade]">移动端</div>
      </div>
      <div className="relative h-[431px] pl-[10px] flex flex-col">
        <div className="absolute left-[236px] top-[11px] w-[8px] h-[393px] rounded-[4px] bg-[#e8e8e8]" />
        <Section title="基本" mt="mt-[10px]" />
        <Field label="控件名称" value="button0" mt="mt-[10px]" />
        <Check label="可用" mt="mt-[10px]" />
        <Check label="可见" mt="mt-[11px]" />
        <Section title="高级" mt="mt-[11px]" />
        <Field label="按钮名字" value="收起" mt="mt-[10px]" />
        <Field label="标签名称" mt="mt-[10px]" />
        <div className="mt-[10px] w-[222px] h-[22px] flex items-center">
          <span className="w-[78px] pl-[5px]">背景</span>
          <div className="w-[144px] h-full flex border-y border-[#dadadc] bg-white">
            <span className="w-[71px] bg-[#3f9bf5] text-white flex items-center justify-center">默认</span>
            <span className="flex-1 flex items-center justify-center">自定义</span>
          </div>
        </div>
        <div className="mt-[20px] w-[222px] h-[20px] flex items-center">
          <span className="w-[78px] pl-[5px]">图标</span>
          <div className="w-[122px] h-full bg-white border border-[#b9b9bb]" />
          <span className="w-[21px] h-full bg-[#d9d9dc] flex items-center justify-center tracking-[1px] text-[#666] text-[11px] font-['Liberation_Sans',sans-serif]">···</span>
        </div>
        <Field label="快捷键" mt="mt-[10px]" />
        <Section title="坐标 · 尺寸" h="h-[24px]" mt="mt-[20px]" />
        <div className="mt-[10px] w-[222px] h-[20px] flex items-center">
          <span className="w-[77px] pl-[5px]">控件位置</span>
          <Spin value="365" />
          <span className="w-[5px]" />
          <Spin value="29" />
        </div>
        <div className="mt-[4px] h-[18px] flex items-center">
          <span className="ml-[91px] w-[36px]">横坐标</span>
          <span className="ml-[39px] w-[36px]">纵坐标</span>
        </div>
        <div className="mt-[8px] w-[222px] h-[20px] flex items-center">
          <span className="w-[77px] pl-[5px]">控件大小</span>
          <Spin value="85" />
          <span className="w-[5px]" />
          <Spin value="31" />
        </div>
      </div>
    </div>
  );
}

export default function App() {
  return (
    <div className="w-[1272px] h-[753px] overflow-hidden bg-white border border-[#74787c] rounded-[6px]">
      <TitleBar />
      <div className="ml-[6px] w-[1258px] h-[717px] border border-[#6f7478] flex flex-col">
        <MenuBar />
        <div className="h-[691px] flex">
          <LeftPanel />
          <div className="w-[10px] bg-[#e8e8e8] pt-[7px]">
            <Tri dir="left" size={10} className="text-[#b0b0b0]" />
          </div>
          <Center />
          <Strip />
          <RightPanel />
        </div>
      </div>
    </div>
  );
}
